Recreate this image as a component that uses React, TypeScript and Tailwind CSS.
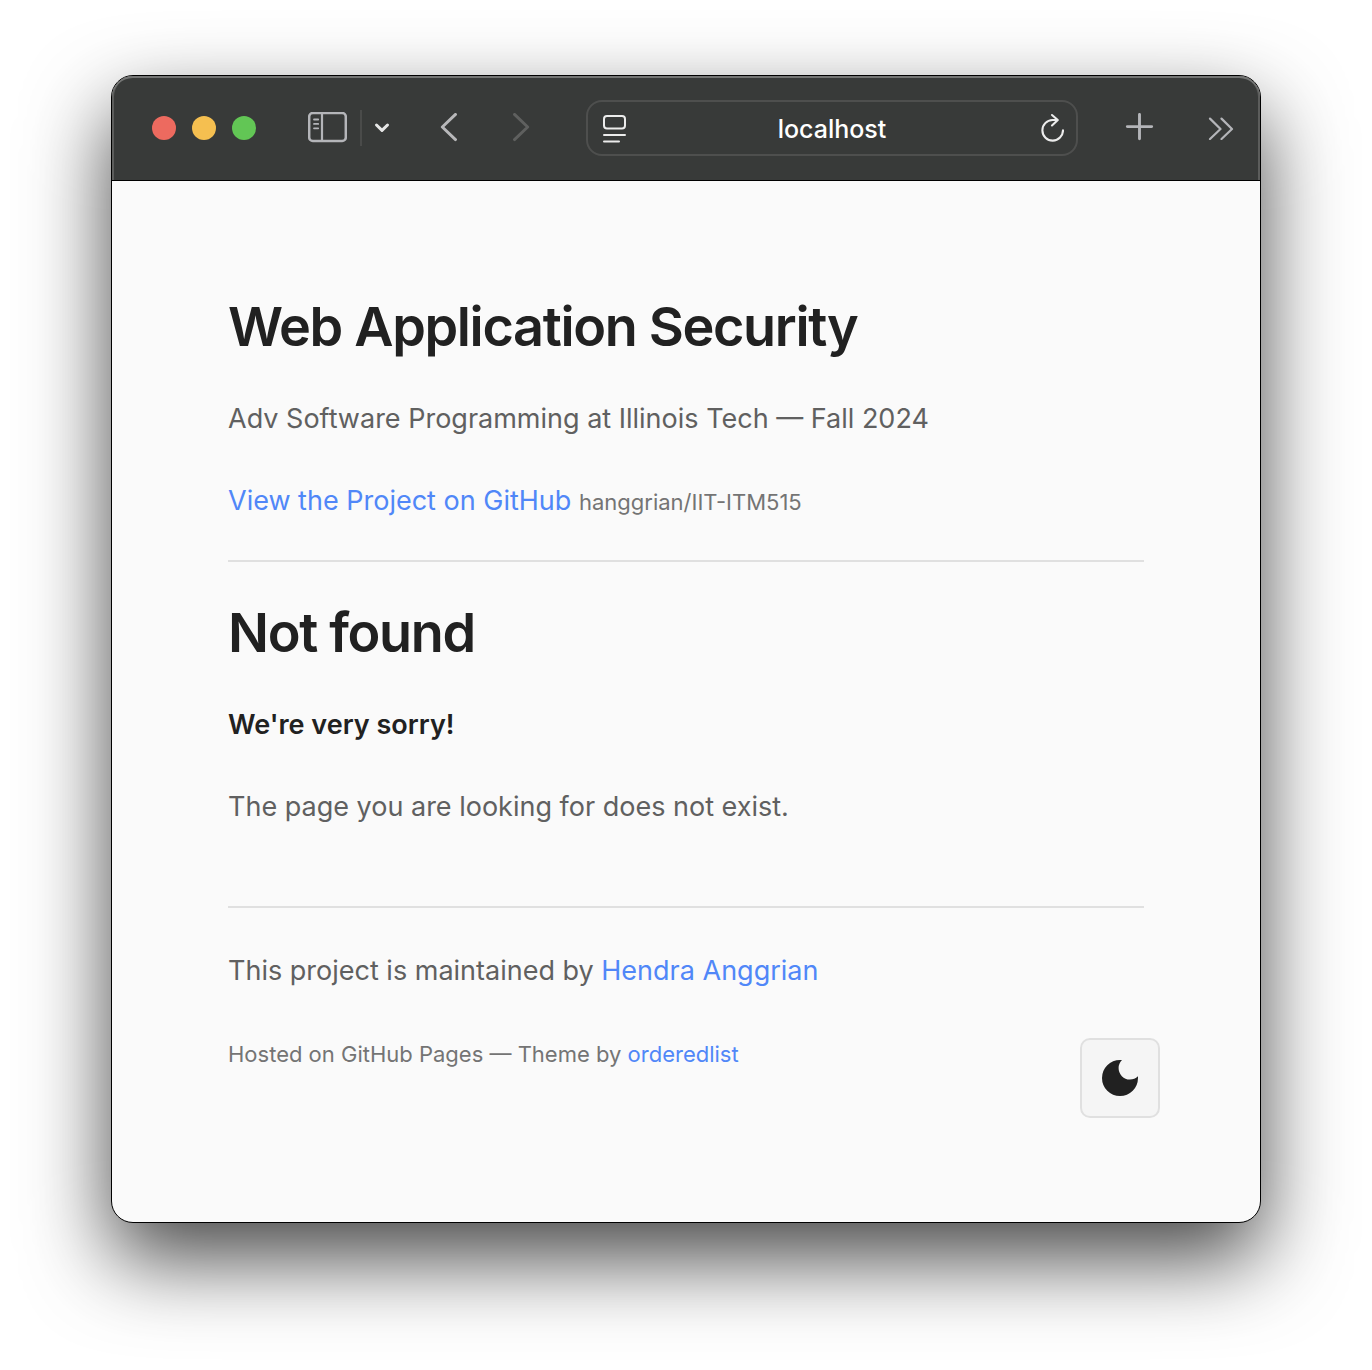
import { useState } from "react";

const stroke = {
  fill: "none",
  stroke: "currentColor",
  strokeLinecap: "round" as const,
  strokeLinejoin: "round" as const,
};

function Toolbar() {
  const [url, setUrl] = useState("localhost");
  return (
    <header className="flex h-[105px] items-center rounded-t-[21px] border-b border-black bg-[#383a39] pr-[26px] pl-10 text-[#b4b5b9] shadow-[inset_0_2px_0_#747574,inset_2px_0_0_#5c5d5c,inset_-2px_0_0_#5c5d5c]">
      <div className="flex gap-4">
        <button aria-label="Close" className="size-6 rounded-full bg-[#ed6a5f]" />
        <button aria-label="Minimize" className="size-6 rounded-full bg-[#f5bf50]" />
        <button aria-label="Zoom" className="size-6 rounded-full bg-[#62c655]" />
      </div>

      <div className="ml-[52px] flex items-center">
        <button aria-label="Show sidebar">
          <svg className="block" width="39" height="32" viewBox="0 0 39 32" {...stroke}>
            <rect x="1.2" y="1" width="36.6" height="28" rx="3.6" strokeWidth="2.5" />
            <path d="M14 1.5v27" strokeWidth="2.2" />
            <path d="M6 7.500h4.2M6 11.900h4.2M6 16.300h4.2" strokeWidth="1.8" />
          </svg>
        </button>
        <span className="ml-[13px] h-9 w-0.5 bg-[#4a4b4a]" />
        <button aria-label="Tab groups" className="ml-3 text-[#e6e6e6]">
          <svg className="block" width="16" height="12" viewBox="0 0 16 12" {...stroke} strokeWidth="3">
            <path d="M2.5 3 8 8.400l5.500-5.400" />
          </svg>
        </button>
      </div>

      <div className="ml-[50px] flex gap-[52px]">
        <button aria-label="Back" className="text-[#b8b8ba]">
          <svg className="block" width="20" height="30" viewBox="0 0 20 30" {...stroke} strokeWidth="2.9">
            <path d="M15.500 1.400 2.300 14 15.500 26.600" />
          </svg>
        </button>
        <button aria-label="Forward" className="text-[#5f605f]">
          <svg className="block" width="20" height="30" viewBox="0 0 20 30" {...stroke} strokeWidth="2.9">
            <path d="M2.500 1.400 15.700 14 2.500 26.600" />
          </svg>
        </button>
      </div>

      <div className="ml-[54px] flex h-14 min-w-0 flex-1 items-center rounded-2xl border-2 border-[#4e4f4e] px-3 text-[#ececec]">
        <button aria-label="Page menu">
          <svg className="block" width="26" height="30" viewBox="0 0 26 30" {...stroke} strokeWidth="2">
            <rect x="4" y="3" width="21" height="12.500" rx="3" />
            <path d="M4 21.900h21M4 28.500h15" />
          </svg>
        </button>
        <input
          aria-label="Address"
          value={url}
          onChange={(e) => setUrl(e.target.value)}
          className="min-w-0 flex-1 bg-transparent pt-0.5 text-center text-[25px] leading-8 font-medium text-white outline-none"
        />
        <button aria-label="Reload">
          <svg className="block" width="26" height="30" viewBox="0 0 26 30" {...stroke} strokeWidth="2.1">
            <path d="M19 7H14.500A10.300 10.300 0 1 0 25 17.300" />
            <path d="M14 2 19.800 7 14 12.500" />
          </svg>
        </button>
      </div>

      <button aria-label="New tab" className="ml-[47px]">
        <svg className="block" width="29" height="30" viewBox="0 0 29 30" {...stroke} strokeWidth="2.900">
          <path d="M14.500 1.400v24.400M2.300 13.600h24.400" />
        </svg>
      </button>
      <button aria-label="More toolbar items" className="ml-[54px]">
        <svg className="block" width="26" height="24" viewBox="0 0 26 24" {...stroke} strokeWidth="2.200">
          <path d="M2 2.600 12.500 13 2 23M13.500 2.600 24 13 13.500 23" />
        </svg>
      </button>
    </header>
  );
}

export default function App() {
  return (
    <div className="min-h-screen overflow-hidden bg-white px-[111px] pt-[75px] pb-[147px] font-['Inter',sans-serif]">
      <div className="relative rounded-[22px] border border-black bg-[#fafafa] shadow-[0_36px_84px_rgba(0,0,0,0.72)]">
        <Toolbar />

        <div className="px-[116px] pt-[115px] pb-[147px] text-[27px] leading-[42px] text-[#606060]">
          <header className="flex flex-col gap-10">
            <h1 className="text-[54px] leading-[62px] font-semibold tracking-tight text-[#212121]">
              Web Application Security
            </h1>
            <p>Adv Software Programming at Illinois Tech — Fall 2024</p>
            <p>
              <a href="#project" className="text-[#5087f8]">View the Project on GitHub</a>{" "}
              <small className="text-[22px] leading-none text-[#747474]">hanggrian/IIT-ITM515</small>
            </p>
          </header>

          <hr className="mt-[38px] mb-10 border-t-2 border-[#e0e0e0]" />

          <main className="flex flex-col gap-10">
            <h1 className="text-[54px] leading-[62px] font-semibold tracking-tight text-[#212121]">Not found</h1>
            <p className="font-semibold text-[#212121]">We're very sorry!</p>
            <p>The page you are looking for does not exist.</p>
          </main>

          <hr className="mt-[78px] mb-[42px] border-t-2 border-[#e0e0e0]" />

          <footer className="flex flex-col gap-[41px]">
            <p>
              This project is maintained by{" "}
              <a href="#maintainer" className="text-[#5087f8]">Hendra Anggrian</a>
            </p>
            <p className="text-[22px] text-[#747474]">
              Hosted on GitHub Pages — Theme by{" "}
              <a href="#theme" className="text-[#5087f8]">orderedlist</a>
            </p>
          </footer>
        </div>

        <button
          aria-label="Switch to dark theme"
          className="absolute right-[100px] bottom-[104px] flex size-20 items-center justify-center rounded-[10px] border-2 border-[#e0e0e0] bg-[#f5f5f5] text-[#212121]"
        >
          <svg width="36" height="36" viewBox="0 0 36 36" fill="currentColor">
            <path d="M18 0a18 18 0 1 0 18 18c0-.500-.030-1.200-.100-1.700A10.800 10.800 0 1 1 20 .100C19.300.030 18.700 0 18 0Z" />
          </svg>
        </button>
      </div>
    </div>
  );
}
